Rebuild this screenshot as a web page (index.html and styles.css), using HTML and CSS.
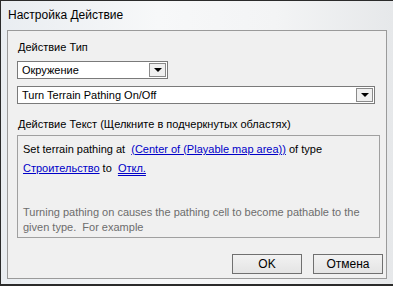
FILE: index.html
```html
<!DOCTYPE html>
<html>
<head>
  <title>Настройка Действие</title>
  <link rel="stylesheet" href="styles.css">
</head>
<body>
  <div class="window">
    <div class="titlebar">Настройка Действие</div>
    <div class="dialog">
      <div class="label">Действие Тип</div>
      <div class="combo combo-short">
        <span class="combo-text">Окружение</span>
        <span class="combo-btn"><span class="arrow"></span></span>
      </div>
      <div class="combo combo-wide">
        <span class="combo-text">Turn Terrain Pathing On/Off</span>
        <span class="combo-btn"><span class="arrow"></span></span>
      </div>
      <div class="label label-text">Действие Текст (Щелкните в подчеркнутых областях)</div>
      <div class="textbox">
        <p class="line">Set terrain pathing at&nbsp; <a class="link">(Center of (Playable map area))</a> of type</p>
        <p class="line"><a class="link">Строительство</a> to&nbsp; <a class="link link-double">Откл.</a></p>
        <p class="hint">Turning pathing on causes the pathing cell to become pathable to the given type.&nbsp; For example</p>
      </div>
      <div class="buttons">
        <button class="btn">OK</button>
        <button class="btn">Отмена</button>
      </div>
    </div>
  </div>
</body>
</html>
```

FILE: styles.css
```css
html, body {
  margin: 0;
  padding: 0;
}

body {
  width: 393px;
  height: 286px;
  overflow: hidden;
  background-color: #2b2b2b;
  font-family: "Liberation Sans", sans-serif;
  font-size: 11px;
  color: #000;
}

.window {
  height: 283px;
  margin-top: 1px;
  margin-left: 1px;
  width: 392px;
  box-sizing: border-box;
  padding: 0 6px 5px 6px;
  background: linear-gradient(to right, #e9edf1, #f7f8f9 40%, #f3f4f5 70%, #e6e8ea);
}

.titlebar {
  height: 29px;
  line-height: 28px;
  padding-left: 1px;
  font-size: 12px;
  color: #000;
}

.dialog {
  height: 249px;
  box-sizing: border-box;
  border: 1px solid #9a9a9a;
  background-color: #f0f0f0;
  padding: 9px 0 0 9px;
}

.label {
  height: 14px;
  line-height: 14px;
  margin-left: 1px;
  margin-bottom: 7px;
}

.combo {
  display: flex;
  height: 18px;
  box-sizing: border-box;
  border: 1px solid #7a7a7a;
  background-color: #fff;
  padding: 1px;
}

.combo-short {
  width: 151px;
}

.combo-wide {
  width: 358px;
  margin-top: 7px;
}

.combo-text {
  flex: 1;
  line-height: 14px;
  padding-left: 3px;
}

.combo-btn {
  width: 17px;
  height: 14px;
  box-sizing: border-box;
  border: 1px solid #8a8a8a;
  background-color: #f0f0f0;
  display: flex;
  align-items: center;
  justify-content: center;
}

.arrow {
  width: 0;
  height: 0;
  border-left: 4px solid transparent;
  border-right: 4px solid transparent;
  border-top: 4px solid #000;
}

.label-text {
  margin-top: 13px;
  margin-bottom: 4px;
}

.textbox {
  width: 363px;
  height: 103px;
  box-sizing: border-box;
  border: 1px solid #a0a0a0;
  background-color: #f0f0f0;
  padding: 6px 4px 0 5px;
}

.line {
  margin: 0 0 5px 0;
  line-height: 14px;
}

.link {
  color: #0000c8;
  text-decoration: underline;
}

.link-double {
  text-decoration-style: double;
}

.hint {
  margin: 30px 0 0 0;
  line-height: 15px;
  color: #6d6d6d;
}

.buttons {
  display: flex;
  justify-content: flex-end;
  gap: 11px;
  margin-top: 16px;
  padding-right: 3px;
}

.btn {
  width: 70px;
  height: 20px;
  box-sizing: border-box;
  border: 1px solid #707070;
  background: linear-gradient(#f2f2f2, #e4e4e4);
  font-family: "Liberation Sans", sans-serif;
  font-size: 12px;
  color: #000;
  padding: 0;
}
```
